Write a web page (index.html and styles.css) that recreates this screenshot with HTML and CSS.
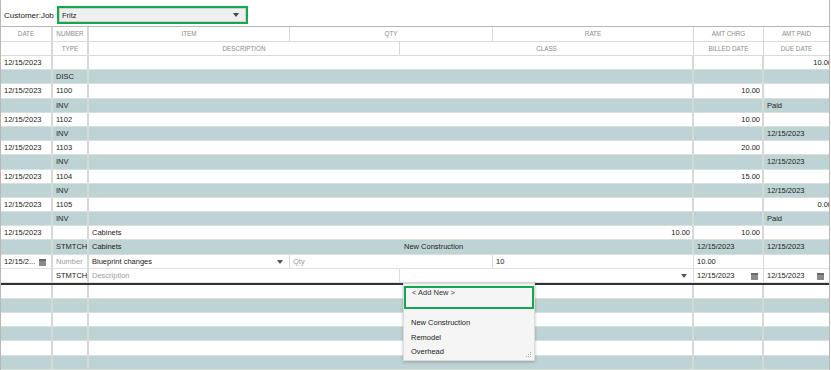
FILE: index.html
```
<!DOCTYPE html>
<html>
<head>
<meta charset="utf-8">
<link rel="stylesheet" href="styles.css">
</head>
<body>
<div class="app">
  <div class="topbar">
    <span class="label">Customer:Job</span>
    <div class="select">
      <span>Fritz</span>
      <svg class="arrow" width="6" height="4" viewBox="0 0 6 4"><path d="M0 0H6L3 4Z" fill="#444"/></svg>
    </div>
  </div>

  <div class="head">
    <div class="hrow">
      <div class="h c1">DATE</div>
      <div class="h c2">NUMBER</div>
      <div class="h">ITEM</div>
      <div class="h">QTY</div>
      <div class="h">RATE</div>
      <div class="h">AMT CHRG</div>
      <div class="h last">AMT PAID</div>
    </div>
    <div class="hrow">
      <div class="h c1"></div>
      <div class="h c2">TYPE</div>
      <div class="h desc">DESCRIPTION</div>
      <div class="h cls">CLASS</div>
      <div class="h">BILLED DATE</div>
      <div class="h last">DUE DATE</div>
    </div>
  </div>

  <div class="body">
    <div class="row w"><div class="c">12/15/2023</div><div class="c"></div><div class="c mid"></div><div class="c r"></div><div class="c r clip"><span class="over">10.00</span></div></div>
    <div class="row t"><div class="c"></div><div class="c">DISC</div><div class="c mid"></div><div class="c"></div><div class="c"></div></div>
    <div class="row w"><div class="c">12/15/2023</div><div class="c">1100</div><div class="c mid"></div><div class="c r">10.00</div><div class="c"></div></div>
    <div class="row t"><div class="c"></div><div class="c">INV</div><div class="c mid"></div><div class="c"></div><div class="c">Paid</div></div>
    <div class="row w"><div class="c">12/15/2023</div><div class="c">1102</div><div class="c mid"></div><div class="c r">10.00</div><div class="c"></div></div>
    <div class="row t"><div class="c"></div><div class="c">INV</div><div class="c mid"></div><div class="c"></div><div class="c">12/15/2023</div></div>
    <div class="row w"><div class="c">12/15/2023</div><div class="c">1103</div><div class="c mid"></div><div class="c r">20.00</div><div class="c"></div></div>
    <div class="row t"><div class="c"></div><div class="c">INV</div><div class="c mid"></div><div class="c"></div><div class="c">12/15/2023</div></div>
    <div class="row w"><div class="c">12/15/2023</div><div class="c">1104</div><div class="c mid"></div><div class="c r">15.00</div><div class="c"></div></div>
    <div class="row t"><div class="c"></div><div class="c">INV</div><div class="c mid"></div><div class="c"></div><div class="c">12/15/2023</div></div>
    <div class="row w"><div class="c">12/15/2023</div><div class="c">1105</div><div class="c mid"></div><div class="c"></div><div class="c r clip"><span class="over">0.00</span></div></div>
    <div class="row t"><div class="c"></div><div class="c">INV</div><div class="c mid"></div><div class="c"></div><div class="c">Paid</div></div>
    <div class="row w"><div class="c">12/15/2023</div><div class="c"></div><div class="c mid split"><span>Cabinets</span><span>10.00</span></div><div class="c r">10.00</div><div class="c"></div></div>
    <div class="row t"><div class="c"></div><div class="c">STMTCH</div><div class="c mid sub"><span class="sdesc">Cabinets</span><span>New Construction</span></div><div class="c">12/15/2023</div><div class="c">12/15/2023</div></div>

    <div class="erow">
      <div class="e date"><span>12/15/2...</span><svg class="cal" width="7" height="7" viewBox="0 0 7 7"><rect width="7" height="7" fill="#8a8a8a"/><rect y="0" width="7" height="2" fill="#6a6a6a"/></svg></div>
      <div class="e ph">Number</div>
      <div class="e dd"><span>Blueprint changes</span><svg class="arrow" width="6" height="4" viewBox="0 0 6 4"><path d="M0 0H6L3 4Z" fill="#555"/></svg></div>
      <div class="e ph">Qty</div>
      <div class="e">10</div>
      <div class="e">10.00</div>
      <div class="e last"></div>
    </div>
    <div class="erow two">
      <div class="e"></div>
      <div class="e">STMTCH</div>
      <div class="e ph">Description</div>
      <div class="e dd"><span></span><svg class="arrow" width="6" height="4" viewBox="0 0 6 4"><path d="M0 0H6L3 4Z" fill="#555"/></svg></div>
      <div class="e date"><span>12/15/2023</span><svg class="cal" width="7" height="7" viewBox="0 0 7 7"><rect width="7" height="7" fill="#8a8a8a"/><rect y="0" width="7" height="2" fill="#6a6a6a"/></svg></div>
      <div class="e date last"><span>12/15/2023</span><svg class="cal" width="7" height="7" viewBox="0 0 7 7"><rect width="7" height="7" fill="#8a8a8a"/><rect y="0" width="7" height="2" fill="#6a6a6a"/></svg></div>
    </div>

    <div class="divider"></div>

    <div class="row w"><div class="c"></div><div class="c"></div><div class="c mid"></div><div class="c"></div><div class="c"></div></div>
    <div class="row t"><div class="c"></div><div class="c"></div><div class="c mid"></div><div class="c"></div><div class="c"></div></div>
    <div class="row w"><div class="c"></div><div class="c"></div><div class="c mid"></div><div class="c"></div><div class="c"></div></div>
    <div class="row t"><div class="c"></div><div class="c"></div><div class="c mid"></div><div class="c"></div><div class="c"></div></div>
    <div class="row w"><div class="c"></div><div class="c"></div><div class="c mid"></div><div class="c"></div><div class="c"></div></div>
    <div class="row t"><div class="c"></div><div class="c"></div><div class="c mid"></div><div class="c"></div><div class="c"></div></div>
  </div>

  <div class="popup">
    <div class="addnew">&lt; Add New &gt;</div>
    <ul class="list">
      <li>New Construction</li>
      <li>Remodel</li>
      <li>Overhead</li>
    </ul>
    <svg class="grip" width="6" height="6" viewBox="0 0 6 6"><g fill="#aaa"><rect x="4" y="0" width="1" height="1"/><rect x="2" y="2" width="1" height="1"/><rect x="4" y="2" width="1" height="1"/><rect x="0" y="4" width="1" height="1"/><rect x="2" y="4" width="1" height="1"/><rect x="4" y="4" width="1" height="1"/></g></svg>
  </div>
</div>
</body>
</html>
```
FILE: styles.css
```
* { box-sizing: border-box; }
body {
  margin: 0;
  font-family: "Liberation Sans", Arial, sans-serif;
  font-size: 7.5px;
  color: #222;
  background: #fff;
}
.app {
  position: relative;
  width: 830px;
  height: 370px;
  border-left: 1px solid #b8b8b8;
  border-right: 1px solid #b8b8b8;
  overflow: hidden;
}
.topbar {
  height: 26px;
  display: flex;
  align-items: center;
  padding-left: 3px;
  padding-top: 4px;
}
.label { font-size: 8px; color: #222; width: 53px; }
.select {
  width: 191px;
  height: 18px;
  border: 2px solid #12a84e;
  background: #efefef;
  box-shadow: inset 0 0 0 1px #d0d0d0;
  display: flex;
  align-items: center;
  justify-content: space-between;
  padding: 0 7px 0 3px;
  font-size: 7.5px;
  color: #222;
}
.head {
  border-top: 1px solid #b5b5b5;
}
.hrow {
  display: grid;
  grid-template-columns: 52px 36px 201px 203px 201px 70px 65px;
  height: 14.5px;
  border-bottom: 1px solid #dadada;
}
.hrow:nth-child(2) {
  grid-template-columns: 52px 36px 311px 294px 70px 65px;
}
.h {
  font-size: 6.3px;
  color: #8c8c8c;
  text-align: center;
  line-height: 13.5px;
  border-right: 1px solid #d8d8d8;
  white-space: nowrap;
}
.h.c1, .h.c2 { border-right: 2px solid #d8d8d8; }
.h.last { border-right: none; }

.row {
  display: grid;
  grid-template-columns: 52px 36px 605px 70px 65px;
  height: 14.2px;
  border-bottom: 1px solid #d9dede;
}
.row.w { background: #fff; }
.row.t { background: #bed4d4; }
.c {
  border-right: 2px solid #d6d9d9;
  padding: 0 2px 0 3px;
  line-height: 13.2px;
  white-space: nowrap;
  overflow: hidden;
}
.row .c:last-child { border-right: none; }
.c.r { text-align: right; }
.c.clip { padding-right: 0; }
.over { margin-right: -3px; }
.split {
  display: flex;
  justify-content: space-between;
}
.sub { display: flex; }
.sdesc { width: 312px; }

.erow {
  display: grid;
  grid-template-columns: 52px 36px 201px 203px 201px 70px 65px;
  height: 14.5px;
  background: #fff;
}
.erow.two {
  grid-template-columns: 52px 36px 311px 294px 70px 65px;
  height: 13.5px;
}
.e {
  border-right: 1px solid #dcdcdc;
  border-bottom: 1px solid #e0e0e0;
  padding: 2px 2px 0 3px;
  line-height: 12px;
  white-space: nowrap;
  overflow: hidden;
  display: flex;
  align-items: center;
  justify-content: space-between;
}
.erow .e:first-child, .erow .e:nth-child(2) { border-right: 2px solid #d6d9d9; }
.e.last { border-right: none; }
.e.ph { color: #a0a0a0; justify-content: flex-start; }
.e.date { padding-right: 0; }
.e.dd { padding-right: 6px; }
.cal { margin-right: 5px; flex: none; }
.arrow { flex: none; }
.divider {
  height: 2px;
  background: #333;
}

.popup {
  position: absolute;
  left: 402px;
  top: 283px;
  width: 132px;
  height: 78px;
  background: #f5f5f5;
  border: 1px solid #dcdcdc;
  box-shadow: 0 1px 3px rgba(0,0,0,0.25);
  padding-top: 2px;
}
.addnew {
  height: 23px;
  border: 2.5px solid #12a84e;
  padding: 0 0 0 6px;
  line-height: 10px;
  font-size: 7.5px;
  color: #333;
}
.list {
  list-style: none;
  margin: 7px 0 0;
  padding: 0 0 0 7px;
}
.list li {
  line-height: 14.5px;
  font-size: 7.5px;
  color: #222;
}
.grip {
  position: absolute;
  right: 2px;
  bottom: 2px;
}
```
